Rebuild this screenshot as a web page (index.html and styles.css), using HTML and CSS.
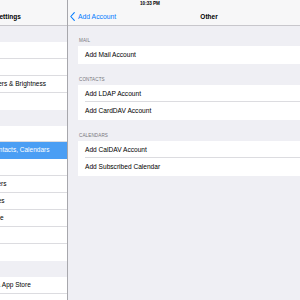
FILE: index.html
```html
<!DOCTYPE html>
<html>
<head>
<meta charset="utf-8">
<link rel="stylesheet" href="styles.css">
</head>
<body>
<div class="screen">
  <div class="status">10:33 PM</div>
  <aside class="master">
    <div class="master-inner">
      <header class="nav"><span class="nav-title">Settings</span></header>
      <div class="gap"></div>
      <ul class="group">
        <li>General</li>
        <li>Sounds</li>
        <li>Wallpapers &amp; Brightness</li>
        <li>Privacy</li>
      </ul>
      <div class="gap"></div>
      <ul class="group">
        <li>iCloud</li>
        <li class="selected">Mail, Contacts, Calendars</li>
        <li>Notes</li>
        <li>Reminders</li>
        <li>Messages</li>
        <li>FaceTime</li>
        <li>Maps</li>
        <li>Safari</li>
      </ul>
      <div class="gap"></div>
      <ul class="group">
        <li>iTunes &amp; App Store</li>
        <li>Music</li>
      </ul>
    </div>
  </aside>
  <main class="detail">
    <header class="nav nav-detail">
      <a class="back"><svg width="5" height="9" viewBox="0 0 5 9"><path d="M4.3 0.6 L0.8 4.5 L4.3 8.4" fill="none" stroke="#007aff" stroke-width="1.1" stroke-linecap="round" stroke-linejoin="round"/></svg><span>Add Account</span></a>
      <span class="nav-title">Other</span>
      <span></span>
    </header>
    <section class="section">
      <h2 class="section-label first">Mail</h2>
      <ul class="cells">
        <li><span class="cell">Add Mail Account</span></li>
      </ul>
    </section>
    <section class="section">
      <h2 class="section-label">Contacts</h2>
      <ul class="cells">
        <li><span class="cell">Add LDAP Account</span></li>
        <li><span class="cell">Add CardDAV Account</span></li>
      </ul>
    </section>
    <section class="section">
      <h2 class="section-label">Calendars</h2>
      <ul class="cells">
        <li><span class="cell">Add CalDAV Account</span></li>
        <li><span class="cell">Add Subscribed Calendar</span></li>
      </ul>
    </section>
  </main>
</div>
</body>
</html>
```
FILE: styles.css
```css
* { box-sizing: border-box; }
html, body { margin: 0; padding: 0; }
body {
  width: 300px;
  height: 300px;
  overflow: hidden;
  font-family: "Liberation Sans", Arial, sans-serif;
  color: #000;
  background: #efeff4;
}
ul { list-style: none; margin: 0; padding: 0; }
h2 { margin: 0; font-weight: normal; }

.screen {
  position: relative;
  display: flex;
  width: 300px;
  height: 300px;
  overflow: hidden;
}

.status {
  position: absolute;
  top: 1px;
  left: 0;
  right: 0;
  text-align: center;
  font-size: 4.6px;
  font-weight: bold;
  line-height: 6px;
  color: #000;
}

/* master column */
.master {
  flex: none;
  width: 68px;
  height: 300px;
  overflow: hidden;
  border-right: 1px solid #a7a7ac;
  background: #efeff4;
}
.master-inner {
  width: 118px;
  margin-left: -51px;
}
.nav {
  height: 26px;
  padding-top: 8px;
  background: #f7f7f8;
  border-bottom: 1px solid #c8c7cc;
  font-size: 6.5px;
  line-height: 17px;
}
.master .nav { text-align: center; }
.nav-title { font-weight: bold; }

.gap { height: 16px; }

.group { background: #fff; }
.group li {
  height: 16.9px;
  padding-left: 26px;
  font-size: 6.5px;
  line-height: 16px;
  white-space: nowrap;
  border-bottom: 1px solid #dcdce0;
}
.group li:last-child { border-bottom: none; }
.group li.selected {
  background: #4a9ef4;
  color: #fff;
  border-bottom-color: #4a9ef4;
}

/* detail column */
.detail {
  flex: none;
  width: 280px;
  height: 300px;
  background: #efeff4;
}
.nav-detail {
  display: grid;
  grid-template-columns: 1fr auto 1fr;
  align-items: center;
  padding-left: 2px;
  font-size: 6.8px;
}
.nav-detail .nav-title { font-size: 6.5px; }
.back {
  display: flex;
  align-items: center;
  gap: 3px;
  color: #007aff;
  white-space: nowrap;
}
.back svg { display: block; }

.section { padding-left: 10px; }
.section-label {
  height: 21px;
  display: flex;
  align-items: flex-end;
  padding-left: 1px;
  padding-bottom: 3px;
  font-size: 4.6px;
  line-height: 5px;
  letter-spacing: 0.1px;
  text-transform: uppercase;
  color: #76767b;
}
.section-label.first { height: 20px; }
.cells { background: #fff; }
.cells li { padding-left: 7px; }
.cell {
  display: block;
  height: 17.5px;
  font-size: 6.6px;
  line-height: 17px;
  white-space: nowrap;
  border-bottom: 1px solid #dcdce0;
}
.cells li:last-child .cell { border-bottom: none; }
```
